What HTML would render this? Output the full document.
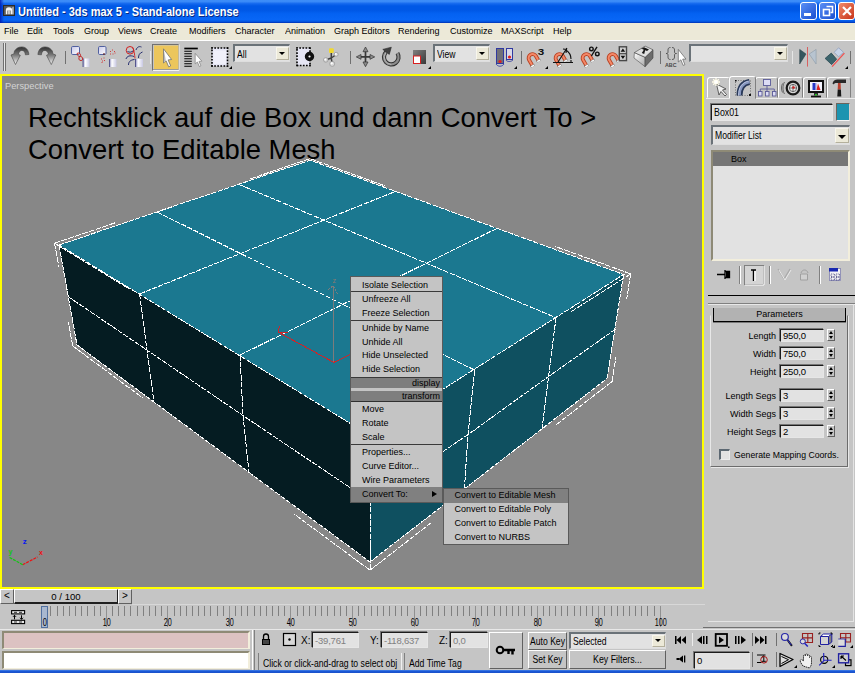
<!DOCTYPE html>
<html>
<head>
<meta charset="utf-8">
<title>3ds max 5</title>
<style>
*{box-sizing:border-box;margin:0;padding:0}
html,body{width:855px;height:673px;overflow:hidden;background:#c5c5c5;font-family:"Liberation Sans",sans-serif;font-size:9px;color:#000}
.abs{position:absolute}
#titlebar{position:absolute;left:0;top:0;width:855px;height:23px;background:linear-gradient(to bottom,#3d8ef8 0%,#3a8af8 7%,#1468ee 16%,#0058e6 26%,#0058e6 45%,#0462f2 60%,#0866f6 86%,#0458e2 93%,#0040c8 97%,#0030b0 100%)}
#titlebar .t{position:absolute;left:18px;top:5px;transform:scaleY(1.18);transform-origin:left center;color:#fff;font-weight:bold;font-size:11px;letter-spacing:0px;text-shadow:1px 1px 0 #0a2a80;white-space:nowrap}
.wb{position:absolute;top:2px;height:18px;margin-left:-0.600px;border:1px solid #fff;border-radius:3px}
#menubar{position:absolute;left:0;top:23px;width:855px;height:17px;background:#ece9d8}
#menubar span{position:absolute;top:2px;font-size:9.600px;transform:scaleX(.94);transform-origin:left center;white-space:nowrap}
#toolbar{position:absolute;left:0;top:40px;width:855px;height:34px;background:#c5c5c5;border-top:1px solid #fff}
.sep{position:absolute;width:2px;border-left:1px solid #808080;border-right:1px solid #fff}
.dd{position:absolute;height:18px;background:#e2e2e2;border:2px solid;border-width:2px 1px 1px 2px;border-color:#6a7278 #dedede #dedede #6a7278;font-size:10.500px;line-height:16px;padding-left:2px;white-space:nowrap;overflow:hidden}
.dd span{display:inline-block;transform:scaleX(.82);transform-origin:left center}
.ddb{position:absolute;right:0;top:1px;bottom:1px;width:13px;background:#ece9d8;border:1px solid;border-color:#f8f6ec #b4b09c #b4b09c #f8f6ec}
.ddb:empty:after{content:"";position:absolute;left:2px;top:50%;margin-top:-2px;border:3.500px solid transparent;border-top:3.500px solid #000;border-bottom:0}
#viewport{position:absolute;left:0;top:74px;width:704px;height:515px;background:#878787;border:2px solid #ffff00;overflow:hidden}
.fld{position:absolute;background:#e2e2e2;border:1px solid;border-color:#1c1c1c #e6e6e6 #e6e6e6 #1c1c1c;box-shadow:-1px -1px 0 rgba(40,40,40,.5);font-size:9.500px;letter-spacing:-.200px;white-space:nowrap;overflow:hidden;padding-left:2px}
.btn{position:absolute;background:#c5c5c5;border:1px solid;border-color:#fff #606060 #606060 #fff;font-size:9px;text-align:center;white-space:nowrap}

#cm,#sm{position:absolute;background:#c4c4c4;border:1px solid #5a5a5a;font-size:9px}
#cm div,#sm div{position:absolute;left:0;right:0;height:14px;line-height:15px;white-space:nowrap}
#cm .i{padding-left:11px}
#cm .l{height:1px;background:#3a3a3a}
#cm .h{background:#7e7e7e;text-align:right;padding-right:2px;height:10.500px;line-height:10px}
#sm .i{padding-left:11px;line-height:13.500px}

.tab{position:absolute;top:3px;height:21px;border:1px solid;border-color:#fff #808080 transparent #fff;border-radius:3px 3px 0 0;background:#c5c5c5}
.lbl{position:absolute;text-align:right;font-size:9px;white-space:nowrap;height:12px;line-height:12px}
.spin{position:absolute;width:8px;height:12px;border:1px solid;border-color:#fff #606060 #606060 #fff;background:#c5c5c5}
.spin:before{content:"";position:absolute;left:1px;top:1px;border:2px solid transparent;border-bottom:3px solid #000;border-top:0}
.spin:after{content:"";position:absolute;left:1px;top:6px;border:2px solid transparent;border-top:3px solid #000;border-bottom:0}
</style>
</head>
<body>
<!-- TITLE BAR -->
<div id="titlebar"><div class="abs" style="left:0;top:0;width:5px;height:23px;background:linear-gradient(to right,rgba(0,24,176,.85) 0,rgba(0,24,176,.5) 1.500px,rgba(0,40,200,0) 4px)"></div>
 <svg class="abs" style="left:3px;top:5px" width="12" height="11" viewBox="0 0 12 11"><rect width="12" height="11" fill="#2a2a2a"/><rect x="1" y="1" width="10" height="9" fill="#585858"/><path d="M2.800 9.300V5.500a3.200 3.200 0 0 1 6.400 0V9.300h-1.600V5.800l-.900-.800v4.300H5.300V5l-.900.800v3.500z" fill="#f4f4f4"/><path d="M9.300 2.500l1.200-.800v7.600h-1.200z" fill="#d8d8d8"/></svg>
 <div class="t">Untitled - 3ds max 5 - Stand-alone License</div>
 <div class="wb" style="left:801px;width:17px;background:linear-gradient(135deg,#5b8ff5,#1a4fd0)"><div class="abs" style="left:3px;top:10px;width:7px;height:3px;background:#fff"></div></div>
 <div class="wb" style="left:820px;width:17px;background:linear-gradient(135deg,#5b8ff5,#1a4fd0)"><svg class="abs" style="left:2px;top:2px" width="12" height="12"><path d="M4.5 1.5h6v6h-2" fill="none" stroke="#fff" stroke-width="1.6"/><rect x="1.5" y="4.5" width="6" height="6" fill="none" stroke="#fff" stroke-width="1.6"/></svg></div>
 <div class="wb" style="left:839px;width:17px;background:linear-gradient(135deg,#f08a6a,#c8341a)"><svg class="abs" style="left:2px;top:2px" width="12" height="12"><path d="M2 2l8 8M10 2l-8 8" stroke="#fff" stroke-width="2.2"/></svg></div>
</div>
<!-- MENU BAR -->
<div id="menubar">
 <span style="left:4px">File</span><span style="left:27px">Edit</span><span style="left:53px">Tools</span><span style="left:84px">Group</span><span style="left:118px">Views</span><span style="left:150px">Create</span><span style="left:189px">Modifiers</span><span style="left:235px">Character</span><span style="left:285px">Animation</span><span style="left:334px">Graph Editors</span><span style="left:398px">Rendering</span><span style="left:450px">Customize</span><span style="left:501px">MAXScript</span><span style="left:553px">Help</span>
</div>
<!-- TOOLBAR -->
<div id="toolbar">
<svg class="abs" style="left:0;top:-1px" width="855" height="34" viewBox="0 40 855 34">
<defs>
 <linearGradient id="gm" x1="0" y1="0" x2="0" y2="1"><stop offset="0" stop-color="#303030"/><stop offset=".45" stop-color="#787878"/><stop offset="1" stop-color="#fafafa"/></linearGradient>
 <linearGradient id="gb" x1="0" y1="0" x2="1" y2="1"><stop offset="0" stop-color="#c8c8e8"/><stop offset="1" stop-color="#ffffff"/></linearGradient>
 <linearGradient id="gs" x1="0" y1="0" x2="1" y2="1"><stop offset="0" stop-color="#808080"/><stop offset="1" stop-color="#383838"/></linearGradient>
 <g id="mag"><path d="M5.070 12.780L1.820 7.150A3.900 3.900 0 0 1 8.580 3.250L11.080 7.580" fill="none" stroke="#b84020" stroke-width="3.800"/><path d="M5.070 12.780L1.820 7.150A3.900 3.900 0 0 1 8.580 3.250L11.080 7.580" fill="none" stroke="#f48868" stroke-width="2"/><path d="M4.770 12.260l.900 1.560M10.780 7.060l.900 1.560" stroke="#707070" stroke-width="4.200"/><path d="M4.970 12.600l.700 1.200M10.980 7.400l.700 1.200" stroke="#fcfcfc" stroke-width="3.200"/></g>
 <path id="fly" d="M0 3h3v-3z" fill="#000"/>
</defs>
<!-- grip -->
<path d="M3.500 43v28M5.500 43v28" stroke="#707070" stroke-width="1"/><path d="M4.500 43v28" stroke="#e8e8e8" stroke-width="1"/>
<!-- undo -->
<path id="undo" d="M28.900 54.500C28.500 50 26 46.900 21.800 46.900C18.500 46.900 16 48.500 14.500 51L13.900 53.900L11 55L15.500 64.500L20.300 55.300L18.200 54.200C19 51.800 20.300 50.400 21.800 50.400C24 50.400 25.200 52 25.400 54.800z" fill="url(#gm)" stroke="#404040" stroke-width=".600"/>
<!-- redo -->
<use href="#undo" transform="translate(66.800 0) scale(-1 1)"/>
<!-- separators -->
<g stroke="#707070" stroke-width="1"><path d="M65.500 51v13M350.500 51v13M521.500 51v13M660.500 51v13M850.500 51v13"/></g><g stroke="#e6e6e6" stroke-width="1"><path d="M150.500 51v13M792.500 51v13"/></g>
<!-- link -->
<defs><linearGradient id="gl" x1="0" y1="0" x2="1" y2="0"><stop offset="0" stop-color="#9090c0"/><stop offset=".35" stop-color="#ffffff"/><stop offset="1" stop-color="#c8c8e4"/></linearGradient></defs>
<rect x="71.500" y="46.500" width="8" height="8" rx="1.200" fill="url(#gb)" stroke="#5060a0"/>
<rect x="83" y="58.500" width="6.500" height="8.500" fill="url(#gl)"/><path d="M83 58.500v8.500" stroke="#404080" stroke-width=".800"/>
<path d="M77 53.500c1.500-1 3-.500 3.500 1s-.500 2-1.500 2c1.500-.500 3 0 3.500 1.500s0 2.500-1.500 2.500s-2.500-1-2-2.500s-.500-1.500-1-2.500s-1-1.500-1-2z" fill="none" stroke="#c02828" stroke-width="1"/>
<!-- unlink -->
<rect x="98.500" y="46.500" width="7.500" height="8" rx="1.200" fill="url(#gb)" stroke="#5060a0"/>
<rect x="109.500" y="59" width="7" height="8" fill="url(#gl)"/><path d="M109.500 59v8" stroke="#404080" stroke-width=".800"/>
<path d="M104 53v2" stroke="#602020" stroke-width="1.200"/>
<path d="M110 51.500h1M112 50h1M114 51.500h1M110 54h1M112.500 54h1M114.500 53h1M101 59h1M103.500 58h1M102 61h1M104 60.500h1M101.500 62.500h1" stroke="#d04040" stroke-width="1"/>
<!-- bind -->
<rect x="135.500" y="59" width="7.500" height="8" fill="url(#gl)"/><path d="M135.500 59v8" stroke="#404080" stroke-width=".800"/>
<circle cx="130" cy="50.300" r="3.800" fill="none" stroke="#d02020" stroke-width="1"/>
<path d="M127.500 51.500c2 1 4 1 6-1M136 50c1-3 3-4 5.500-3M138.500 58c0-3 1-5 4-6M126 59c1-3 4-4 8-2.500M128.500 65c0-3 1.500-5 6-5.500" fill="none" stroke="#283070" stroke-width="1"/>
<path d="M132.500 47.500c2 3 2 7 2.500 11" fill="none" stroke="#d02020" stroke-width=".900"/>
<!-- select (active) -->
<rect x="152.500" y="44.500" width="26" height="25.500" fill="#c5c5c5" stroke="#707070"/><path d="M153 70.500h26v-26" fill="none" stroke="#f4f4f4"/>
<rect x="154" y="45.500" width="24.300" height="23.500" fill="#ecc65c"/>
<path d="M163.500 48.800v14.200l2.600-2.200l2.600 6l2-.900l-2.600-6l3.500-.400z" fill="#fff" stroke="#707070" stroke-width=".800"/>
<path d="M164 50.500v11.500l1.800-1.500z" fill="#b8b8b8"/>
<!-- select by name -->
<path d="M184.300 48.500h13.500" stroke="#000" stroke-width="1.700"/>
<path d="M184.300 51.200h7.500M184.300 53.700h7.500M184.300 56.200h7.500M184.300 58.700h7.500M184.300 61.200h7.500M184.300 63.700h7.500M184.300 66.200h7.500" stroke="#000" stroke-width="1.100"/>
<path d="M195.200 53.400v10.500l2.200-1.900l1.900 4.500l1.600-.700l-1.900-4.400l2.900-.200z" fill="#fff" stroke="#808080" stroke-width=".700"/>
<!-- region -->
<rect x="212" y="48" width="15.500" height="18" fill="#e6e6f4"/><rect x="213.500" y="50.500" width="12.500" height="13.500" fill="#f0f0fa"/>
<g stroke="#000" stroke-width="1.600" stroke-dasharray="1.700 1.400"><path d="M211.2 48.0h17.1"/><path d="M228.3 66.0h-17.1"/><path d="M227.5 47.2v19.6"/><path d="M212.0 66.8v-19.6"/></g>
<use href="#fly" x="229" y="66"/>
<!-- window/crossing -->
<rect x="297" y="48" width="13" height="17.500" fill="#e6e6f4"/>
<g stroke="#000" stroke-width="1.600" stroke-dasharray="1.700 1.400"><path d="M296.2 48.0h14.6"/><path d="M310.8 65.5h-14.6"/><path d="M310.0 47.2v19.1"/><path d="M297.0 66.3v-19.1"/></g>
<circle cx="309.500" cy="56.500" r="2.900" fill="#fff" stroke="#101010" stroke-width="3.600"/>
<!-- manipulate -->
<path d="M331.300 51v7l-5.500 2M331.300 58l5-3.500M331.300 58l.900 6" stroke="#404040" stroke-width="1.500" fill="none"/>
<rect x="329" y="48.300" width="4.800" height="4.600" rx="1" fill="#f0d830"/>
<circle cx="325.800" cy="59.900" r="2.300" fill="#d4d4d4" stroke="#8c8c8c" stroke-width=".600"/><circle cx="336.200" cy="54.400" r="2" fill="#dcdcdc" stroke="#8c8c8c" stroke-width=".600"/><circle cx="332.200" cy="63.900" r="2.500" fill="#d8d8d8" stroke="#8c8c8c" stroke-width=".600"/>
<circle cx="325.300" cy="59.400" r="1" fill="#fff"/><circle cx="335.800" cy="54" r=".900" fill="#fff"/><circle cx="331.700" cy="63.300" r="1.100" fill="#fff"/>
<!-- move -->
<path d="M365.500 51v12M359.500 56.900h12" stroke="#383838" stroke-width="1.700"/>
<g fill="#8c8c8c" stroke="#303030" stroke-width=".700" stroke-linejoin="round"><path d="M365.500 47l2.500 4.700h-5z"/><path d="M365.500 66.700l2.500-4.700h-5z"/><path d="M356.300 56.900l4.700-2.400v4.800z"/><path d="M374.700 56.900l-4.700-2.400v4.800z"/></g>
<!-- rotate -->
<path d="M386.100 52A7.300 7.300 0 1 0 397.400 53.200" fill="none" stroke="#303030" stroke-width="4.200"/><path d="M386.100 52A7.300 7.300 0 1 0 397.400 53.200" fill="none" stroke="#8c8c8c" stroke-width="2.200"/><path d="M385.600 53A7.300 7.300 0 0 0 391.300 64.500" fill="none" stroke="#b8b8b8" stroke-width="1"/>
<path d="M382.800 49.400L391.300 47.200L389.300 54.400z" fill="#404040" stroke="#282828" stroke-width=".600"/>
<!-- scale -->
<rect x="413" y="50" width="13" height="14" fill="url(#gs)"/><rect x="413.500" y="56" width="7" height="7.500" fill="#fff" stroke="#d82020"/>
<use href="#fly" x="428" y="66"/>
<!-- use pivot -->
<rect x="496.500" y="48.500" width="7" height="15" fill="#707078" stroke="#3038a0"/><rect x="506.500" y="48.500" width="6" height="11" fill="#d8d8e8" stroke="#3038a0"/>
<path d="M496 64c2 3 6 3 8 0M506 60c1 2 5 2 7 0" fill="none" stroke="#3038a0" stroke-width=".800"/>
<circle cx="500" cy="61.500" r="1.600" fill="#e02020"/><circle cx="509.500" cy="57" r="1.600" fill="#e02020"/>
<use href="#fly" x="514" y="66"/>
<!-- snaps -->
<use href="#mag" x="527.3" y="52.800"/><text x="537.700" y="55" font-size="9.500" font-weight="bold" font-family="Liberation Sans" fill="#101010" textLength="6.500" lengthAdjust="spacingAndGlyphs">3</text>
<use href="#fly" x="545" y="66"/>
<use href="#mag" x="554.3" y="52.800"/><path d="M553 62.500h20M558 62l9-14M566 50c3 2 5 5 5 9M563 49l3.500.500l-.500 3.500M571 60v3" fill="none" stroke="#101010" stroke-width="1.100"/>
<use href="#mag" x="581.3" y="52.800"/><circle cx="591.400" cy="48.900" r="1.800" fill="none" stroke="#101010" stroke-width="1.400"/><circle cx="597.300" cy="53.900" r="1.800" fill="none" stroke="#101010" stroke-width="1.400"/><path d="M597 46.800L591.400 56" stroke="#101010" stroke-width="1.400"/>
<use href="#mag" x="607.3" y="52.800"/><rect x="619.300" y="46.800" width="7.200" height="13.800" fill="#cfcfcf" stroke="#484848" stroke-width="1.400"/><path d="M619.300 53.700h7.200" stroke="#484848" stroke-width="1.200"/><path d="M620.600 51.800h4.600l-2.300-3.300zM620.600 55.800h4.600l-2.300 3.300z" fill="#101010"/>
<!-- keycap -->
<defs><linearGradient id="gk" x1="0" y1="0" x2="1" y2="1"><stop offset="0" stop-color="#ffffff"/><stop offset="1" stop-color="#a8a8a8"/></linearGradient></defs>
<path d="M634.400 52.600L645.100 57.300L645.100 66.700L634 58z" fill="url(#gk)" stroke="#505050" stroke-width=".600"/>
<path d="M645.100 57.300L653 49.800L653 58L645.100 66.700z" fill="#6c6c6c" stroke="#404040" stroke-width=".600"/>
<path d="M634.400 52.600L645.100 46.100L653 49.800L645.100 57.300z" fill="#e0e0e0" stroke="#404040" stroke-width=".600"/>
<path d="M639.500 50l4.500-2.700l5 2.300l-2 1.400l-1.800-.800l-1 3.800l-2.400-1l2-3.300l-2.300-1z" fill="#181818"/>
<!-- {} ABC -->
<path d="M670.500 47.500c-2 0-2.500 1-2.500 2.500v2c0 1-.500 1.500-2 1.500c1.500 0 2 .500 2 1.500v2c0 1.500.500 2.500 2.500 2.500M672 47.500c2 0 2.500 1 2.500 2.500v2c0 1 .500 1.500 2 1.500c-1.500 0-2 .500-2 1.500v2c0 1.500-.500 2.500-2.500 2.500" fill="none" stroke="#505050" stroke-width=".900"/>
<text x="665" y="66.500" font-size="6" font-weight="bold" font-family="Liberation Sans" fill="#484848" textLength="11.500" lengthAdjust="spacingAndGlyphs">ABC</text>
<path d="M678.300 49.400v12.600l2.600-2.200l2.200 5.600l1.800-.700l-2.200-5.600h3.300z" fill="#fff" stroke="#606060" stroke-width=".700"/>
<!-- mirror -->
<path d="M799.700 49.400L806 54L799.700 64z" fill="#34565e" stroke="#20383e" stroke-width=".500"/><path d="M816.100 49.400L809.200 54L816.100 64z" fill="#b8c4d0" stroke="#8090a0" stroke-width=".500"/><path d="M807.500 47v19.600" stroke="#d86060" stroke-width="1"/>
<!-- align -->
<path d="M825.100 58.400L831.300 53.100L836.600 59.200L831.700 64.600z" fill="#3c646c" stroke="#284850" stroke-width=".800" stroke-linejoin="round"/>
<path d="M834.100 52.300L838.600 47.800L843.600 52.300L838.600 56.800z" fill="#c8d4e8" stroke="#8898b8" stroke-width=".700"/>
<path d="M832.100 66.600L844.400 53.100" stroke="#f05050" stroke-width="1.300"/>
<use href="#fly" x="845" y="66"/>
</svg>
<div class="dd" style="left:233px;top:3px;width:57px"><span>All</span><div class="ddb"></div></div>
<div class="dd" style="left:433px;top:3px;width:57px"><span>View</span><div class="ddb"></div></div>
<div class="dd" style="left:689px;top:3px;width:99px"><div class="ddb"></div></div>

</div>
<!-- VIEWPORT -->
<div id="viewport">
<svg class="abs" style="left:-2px;top:-2px" width="704" height="515" viewBox="0 74 704 515">
 <!-- box faces -->
 <polygon points="59.0,245.0 310.0,160.2 623.6,274.5 370.0,435.5" fill="#1b7890" shape-rendering="crispEdges"/>
 <polygon points="59.0,245.0 370.0,435.5 370.0,562.0 77.0,345.0" fill="#051c22"/>
 <polygon points="370.0,435.5 623.6,274.5 607.0,378.5 370.0,562.0" fill="#0f5060"/>
 <g stroke="#fff" stroke-width="1" fill="none" shape-rendering="crispEdges" stroke-dasharray="5.500 1.200">
  <polygon points="59.0,245.0 310.0,160.2 623.6,274.5 370.0,435.5"/>
  <path d="M157.5 212.1L474.6 370.1M239.4 184.6L556.0 317.7M139.6 294.0L396.2 191.1M240.0 355.1L496.1 228.8M59.0 245.0L77.0 345.0L370.0 562.0L370.0 435.5M68 296.500L147 350.100L243 415.600L370 501M139.600 294L147 350.100L154 402M240 355.100L243 415.600L249 472.600M623.6 274.5L607.0 378.5L370.0 562.0M370 501L468 434.600L548.600 376.500L615.500 329.200M474.600 370.100L468 434.600L464.400 489M556 317.700L548.600 376.500L541.900 429.600"/>
 </g>
 <!-- selection brackets -->
 <g stroke="#fff" stroke-width="1" fill="none" shape-rendering="crispEdges" stroke-dasharray="6 1.200"><path d="M54.6 243.3L114.8 222.9M54.6 243.3L58.9 267.3M54.6 243.3L129.2 289.0M310.0 158.6L249.8 179.0M310.0 158.6L385.3 186.0M630.7 273.9L555.4 246.5M630.7 273.9L626.7 298.9M630.7 273.9L569.8 312.5M72.7 346.0L68.4 322.0M72.7 346.0L143.0 398.1M612.0 381.6L616.0 356.6M612.0 381.6L555.1 425.6M370.0 570.2L294.1 514.0M370.0 570.2L431.4 522.6M370.0 570.2L370.0 539.8"/></g>
 <!-- pivot axis -->
 <g stroke="#d02428" stroke-width="1" fill="none" shape-rendering="crispEdges"><path d="M278.600 332.400L333.800 362.400L352 353.500M279.300 325.700L278.600 332.400L288.200 332.400"/></g>
 <g stroke="#7c7c7c" stroke-width="1" fill="none" shape-rendering="crispEdges"><path d="M333.500 362L333.500 285.600"/><path d="M328 289.500L333.500 285.600L338 295" stroke-dasharray="2 1.500"/></g>
 <text x="332.500" y="283" font-size="7" fill="#8a7a70" font-family="Liberation Sans">z</text>
 <!-- world axis -->
 <g fill="none" stroke-width="1.200"><path d="M22.700 564.700L37.500 557" stroke="#f01010" stroke-dasharray="3 1"/><path d="M22.700 564.700L8.800 557" stroke="#10c810" stroke-dasharray="3 1"/></g>
 <text x="22.700" y="544" font-size="8" font-weight="bold" fill="#0818f0" font-family="Liberation Sans">z</text>
 <text x="39" y="555" font-size="7" font-weight="bold" fill="#f01010" font-family="Liberation Sans">x</text>
 <text x="8.500" y="554" font-size="7" font-weight="bold" fill="#10c810" font-family="Liberation Sans">y</text>
 <text x="5" y="88.500" font-size="9.300" fill="#d4d4d4" font-family="Liberation Sans">Perspective</text>
 <text x="28" y="127" font-size="27.4" fill="#000" font-family="Liberation Sans">Rechtsklick auf die Box und dann Convert To &gt;</text>
 <text x="28" y="159" font-size="27.4" fill="#000" font-family="Liberation Sans">Convert to Editable Mesh</text>
</svg>
<div id="cm" style="left:348px;top:200px;width:93px;height:227px">
 <div class="i" style="top:1px">Isolate Selection</div>
 <div class="i" style="top:15px">Unfreeze All</div>
 <div class="i" style="top:29px">Freeze Selection</div>
 <div class="i" style="top:44px">Unhide by Name</div>
 <div class="i" style="top:58px">Unhide All</div>
 <div class="i" style="top:71px">Hide Unselected</div>
 <div class="i" style="top:85px">Hide Selection</div>
 <div class="l" style="top:14px"></div><div class="l" style="top:43px"></div>
 <div class="l" style="top:99.500px"></div><div class="h" style="top:100.500px">display</div><div class="h" style="top:113.500px">transform</div>
 <div class="l" style="top:124px;background:#303030"></div>
 <div class="i" style="top:125px">Move</div>
 <div class="i" style="top:139px">Rotate</div>
 <div class="i" style="top:153px">Scale</div>
 <div class="l" style="top:167px"></div>
 <div class="i" style="top:168px">Properties...</div>
 <div class="i" style="top:182px">Curve Editor...</div>
 <div class="i" style="top:196px">Wire Parameters</div>
 <div class="i" style="top:210px;height:15px;background:#808080">Convert To:<span style="position:absolute;right:5px;top:4px;border:3.500px solid transparent;border-left:5.500px solid #000;border-right:0"></span></div>
</div>
<div id="sm" style="left:440.500px;top:411.500px;width:126px;height:57.500px">
 <div class="i" style="top:0px;background:#808080">Convert to Editable Mesh</div>
 <div class="i" style="top:14px">Convert to Editable Poly</div>
 <div class="i" style="top:28px">Convert to Editable Patch</div>
 <div class="i" style="top:42px">Convert to NURBS</div>
</div>


</div>
<!-- RIGHT PANEL -->
<div id="panel" class="abs" style="left:704px;top:74px;width:151px;height:515px">
<div class="tab" style="left:3px;width:23px"></div>
<div class="tab" style="left:25px;width:27px;top:2px;height:23px;background:#c5c5c5;z-index:2"></div>
<div class="tab" style="left:51px;width:23px"></div>
<div class="tab" style="left:74px;width:25px"></div>
<div class="tab" style="left:99px;width:24px"></div>
<div class="tab" style="left:123px;width:24px"></div>
<div class="abs" style="left:2px;top:24px;width:149px;height:1px;background:#ececec"></div>
<svg class="abs" style="left:0;top:0;z-index:3" width="151" height="26" viewBox="704 74 151 26">
 <!-- create: arrow with star -->
 <path d="M716.500 84l2.500 11l2-3.500l4 4.500l1.500-1.500l-4-4.500l3.500-1z" fill="#f0f0f0" stroke="#404040" stroke-width=".800"/>
 <path d="M716 78v8M712 82h8M713.200 79.200l5.600 5.600M718.800 79.200l-5.600 5.600" stroke="#fffce8" stroke-width="1.300"/><circle cx="716" cy="82" r="1.800" fill="#fff"/>
 <!-- modify: arc -->
 <path d="M735.500 80.500h15v15h-15z" fill="none" stroke="#505050" stroke-width=".700" stroke-dasharray="1 1.500"/>
 <path d="M739.500 95.500c0-8 3.500-12.500 10-13.500" fill="none" stroke="#283858" stroke-width="6"/>
 <path d="M739.500 95.500c0-8 3.500-12.500 10-13.500" fill="none" stroke="#8898c0" stroke-width="2.600"/>
 <path d="M738.500 95.500c0-8 3.500-13 10-14.500" fill="none" stroke="#c8d0e8" stroke-width=".800"/>
 <rect x="749" y="94" width="2" height="2" fill="#101010"/><rect x="735" y="80" width="1.500" height="1.500" fill="#101010"/>
 <!-- hierarchy -->
 <g fill="#dcdcf4" stroke="#5a5a98" stroke-width=".900"><rect x="763.500" y="79.500" width="7" height="6"/><rect x="758.500" y="91.500" width="3.500" height="4.500"/><rect x="765.500" y="91.500" width="3.500" height="4.500"/><rect x="772.500" y="91.500" width="3.500" height="4.500"/></g>
 <path d="M767 86v5.500M760.300 91.500v-2.500h14v2.500" fill="none" stroke="#5a5a98" stroke-width=".900"/>
 <!-- motion wheel -->
 <circle cx="793" cy="88" r="6.300" fill="#d8d8d8" stroke="#181818" stroke-width="2.200"/>
 <circle cx="793" cy="88" r="3.600" fill="#ececec" stroke="#505050" stroke-width=".800"/>
 <path d="M793 84v8M789 88h8" stroke="#505050" stroke-width=".800"/><circle cx="793.500" cy="87.500" r="1.300" fill="#d02020"/>
 <path d="M784.500 82c-2 3-2 9 0 12M782.500 83.500c-1.300 2.500-1.300 6.500 0 9" fill="none" stroke="#585858" stroke-width=".900"/>
 <!-- display monitor -->
 <rect x="809" y="81" width="14" height="11" fill="#f4f4ff" stroke="#101010" stroke-width="2"/>
 <path d="M811 96.500h10" stroke="#101010" stroke-width="1.800"/><path d="M814 93h4v2.500h-4z" fill="#303030"/><path d="M815 94h2v1.500h-2z" fill="#20c020"/>
 <path d="M812.500 83h3v7h-3z" fill="#2838c8"/><path d="M818 83.500l2.500 6.500h-4z" fill="#d82020"/><path d="M816 83v7" stroke="#8080d0" stroke-width=".800"/>
 <!-- utilities hammer -->
 <path d="M832.500 83.500c.500-2.500 2.500-4 5-4h8.500v3.500h-9.500c-1.500 0-2.500.500-3 1.500z" fill="#282828"/>
 <path d="M838 83h2.600l.300 6.500h-3.200z" fill="#b84030"/><path d="M837.700 89.500h3.200l.400 7h-4z" fill="#181818"/>
</svg>
<div class="fld" style="left:7px;top:29.500px;width:122px;height:17px;line-height:15px;font-size:10.500px;letter-spacing:0"><span style="display:inline-block;transform:scaleX(.84);transform-origin:left center">Box01</span></div>
<div class="abs" style="left:132.300px;top:29.200px;width:14px;height:17.600px;background:#1c94b0;border:1px solid;border-color:#6c645c #d8d0cc #f4f4f4 #6c645c;border-width:.600px .600px 1px .600px"></div>
<div class="dd" style="left:7px;top:51px;width:139px;height:20px;line-height:17px"><span>Modifier List</span><div class="ddb" style="width:14.500px"><div class="abs" style="left:2.500px;top:6px;border:4px solid transparent;border-top:4px solid #000;border-bottom:0"></div></div></div>
<div class="abs" style="left:7px;top:76px;width:138.500px;height:111px;background:#e2e2e2;border:2px solid;border-color:#8e8a76 #f2eedc #f2eedc #8e8a76;font-size:9px"><div style="position:absolute;left:0;top:0;right:0;height:14px;background:#767676;line-height:14px;padding-left:18px">Box</div></div>
<svg class="abs" style="left:0;top:188px" width="151" height="26" viewBox="704 262 151 26">
 <path d="M717 274.500h8M725 270v9M725.500 271.500h4v6h-4" stroke="#000" stroke-width="1.300" fill="none"/><path d="M726 272h4v5h-4z" fill="#000"/>
 <path d="M739.500 266v18M769.500 266v18M819.500 266v18" stroke="#808080" stroke-width="1"/><path d="M740.500 266v18M770.500 266v18M820.500 266v18" stroke="#fff" stroke-width="1"/>
 <rect x="744.500" y="265.500" width="19" height="19" fill="#d4d4d4" stroke="#808080"/><path d="M745 285h19v-19" fill="none" stroke="#fff"/>
 <path d="M751 270h5M753.500 270v11" stroke="#000" stroke-width="1.400"/><path d="M755 271v10" stroke="#fff" stroke-width="1.400"/>
 <path d="M778 269l6 10M790 269l-6 10" stroke="#a8a8a8" stroke-width="1.200" fill="none"/><path d="M779 270l6 10M791 270l-6 10" stroke="#e8e8e8" stroke-width="1" fill="none"/>
 <path d="M800.500 274v6h7v-6z" fill="#d0d0d0" stroke="#a0a0a0"/><path d="M801 273c1-4 6-4 7 0" fill="none" stroke="#a0a0a0"/>
 <rect x="829.500" y="268.500" width="11" height="12" fill="#f4f4f4" stroke="#8080b0" stroke-width=".800"/><rect x="829" y="268" width="9" height="3.500" fill="#1828b0"/>
 <path d="M831 274h3.500v2.500h-3.500zM836 274h3.500v2.500h-3.500zM831 277.500h3.500v2.500h-3.500zM836 277.500h3.500v2.500h-3.500z" fill="none" stroke="#303070" stroke-width=".700" stroke-dasharray="1 .700"/>
</svg>
<div class="abs" style="left:4px;top:221px;width:147px;height:1px;background:#000"></div>
<div class="abs" style="left:4px;top:229px;width:147px;height:1px;background:#808080"></div>
<div class="abs" style="left:4px;top:230px;width:147px;height:1px;background:#e8e8e8"></div>
<div class="abs" style="left:6px;top:241px;width:138px;height:152px;border:1px solid;border-color:transparent #6c6c6c #6c6c6c #e8e8e8;box-shadow:1px 1px 0 #e8e8e8"></div>
<div class="abs" style="left:9px;top:234px;width:133px;height:14px;background:#b2b2b2;border:1px solid #000;border-top:0;box-shadow:0 .500px 0 #303030;text-align:center;line-height:13px">Parameters</div>
<div class="lbl" style="left:10px;top:256px;width:62px">Length</div><div class="fld" style="left:76px;top:255px;width:44px;height:13px;line-height:11px">950,0</div><div class="spin" style="left:123px;top:255px"></div>
<div class="lbl" style="left:10px;top:274px;width:62px">Width</div><div class="fld" style="left:76px;top:273px;width:44px;height:13px;line-height:11px">750,0</div><div class="spin" style="left:123px;top:273px"></div>
<div class="lbl" style="left:10px;top:292px;width:62px">Height</div><div class="fld" style="left:76px;top:291px;width:44px;height:13px;line-height:11px">250,0</div><div class="spin" style="left:123px;top:291px"></div>
<div class="lbl" style="left:10px;top:316px;width:62px">Length Segs</div><div class="fld" style="left:76px;top:315px;width:44px;height:13px;line-height:11px">3</div><div class="spin" style="left:123px;top:315px"></div>
<div class="lbl" style="left:10px;top:334px;width:62px">Width Segs</div><div class="fld" style="left:76px;top:333px;width:44px;height:13px;line-height:11px">3</div><div class="spin" style="left:123px;top:333px"></div>
<div class="lbl" style="left:10px;top:352px;width:62px">Height Segs</div><div class="fld" style="left:76px;top:351px;width:44px;height:13px;line-height:11px">2</div><div class="spin" style="left:123px;top:351px"></div>
<div class="abs" style="left:15px;top:375px;width:11px;height:11px;background:#e2e2e2;border:1px solid;border-width:2px 1px 1px 2px;border-color:#5c6872 #ececec #ececec #5c6872"></div>
<div class="abs" style="left:30px;top:374.500px;white-space:nowrap;line-height:12px;font-size:9.500px"><span style="display:inline-block;transform:scaleX(.915);transform-origin:left center">Generate Mapping Coords.</span></div>

</div>
<!-- BOTTOM -->
<div id="bottom" class="abs" style="left:0;top:589px;width:855px;height:84px">
<div class="btn" style="left:0;top:0;width:14px;height:15px;line-height:12px;font-size:10px">&lt;</div><div class="btn" style="left:14px;top:0;width:104px;height:15px;line-height:13px;font-size:9.600px;border-color:#fff #202020 #202020 #fff;border-bottom-width:2px">0 / 100</div><div class="btn" style="left:118px;top:0;width:14px;height:15px;line-height:12px;font-size:10px">&gt;</div>
<div class="abs" style="left:708px;top:32px;width:146px;height:1px;background:#e4e4e4"></div><div class="abs" style="left:853px;top:-285px;width:1px;height:318px;background:#e4e4e4"></div><div class="abs" style="left:703px;top:38px;width:152px;height:1px;background:#707070"></div>
<svg class="abs" style="left:0;top:15px" width="705" height="26" viewBox="0 604 705 26"><path d="M132 604.500h573" stroke="#d8d8d8"/><path d="M50.5 606v10M57.5 606v10M63.5 606v10M69.5 606v10M75.5 606v10M81.5 606v10M87.5 606v10M94.5 606v10M100.5 606v10M112.5 606v10M118.5 606v10M124.5 606v10M130.5 606v10M137.5 606v10M143.5 606v10M149.5 606v10M155.5 606v10M161.5 606v10M174.5 606v10M180.5 606v10M186.5 606v10M192.5 606v10M198.5 606v10M204.5 606v10M210.5 606v10M217.5 606v10M223.5 606v10M235.5 606v10M241.5 606v10M247.5 606v10M254.5 606v10M260.5 606v10M266.5 606v10M272.5 606v10M278.5 606v10M284.5 606v10M297.5 606v10M303.5 606v10M309.5 606v10M315.5 606v10M321.5 606v10M327.5 606v10M334.5 606v10M340.5 606v10M346.5 606v10M358.5 606v10M364.5 606v10M371.5 606v10M377.5 606v10M383.5 606v10M389.5 606v10M395.5 606v10M401.5 606v10M407.5 606v10M420.5 606v10M426.5 606v10M432.5 606v10M438.5 606v10M444.5 606v10M451.5 606v10M457.5 606v10M463.5 606v10M469.5 606v10M481.5 606v10M487.5 606v10M494.5 606v10M500.5 606v10M506.5 606v10M512.5 606v10M518.5 606v10M524.5 606v10M531.5 606v10M543.5 606v10M549.5 606v10M555.5 606v10M561.5 606v10M567.5 606v10M574.5 606v10M580.5 606v10M586.5 606v10M592.5 606v10M604.5 606v10M611.5 606v10M617.5 606v10M623.5 606v10M629.5 606v10M635.5 606v10M641.5 606v10M647.5 606v10M654.5 606v10" stroke="#808080" stroke-width="1"/><path d="M44.5 606v21M106.5 606v21M167.5 606v21M229.5 606v21M290.5 606v21M352.5 606v21M414.5 606v21M475.5 606v21M537.5 606v21M598.5 606v21M660.5 606v21" stroke="#909090" stroke-width="1"/><rect x="41.500" y="606.500" width="6" height="21" fill="#a8b8d0" stroke="#5070a0"/><text x="42.7" y="625.600" font-size="10" font-family="Liberation Sans" textLength="4.2" lengthAdjust="spacingAndGlyphs" fill="#000">0</text><text x="102.8" y="625.600" font-size="10" font-family="Liberation Sans" textLength="8.0" lengthAdjust="spacingAndGlyphs" fill="#000">10</text><text x="163.8" y="625.600" font-size="10" font-family="Liberation Sans" textLength="8.0" lengthAdjust="spacingAndGlyphs" fill="#000">20</text><text x="225.8" y="625.600" font-size="10" font-family="Liberation Sans" textLength="8.0" lengthAdjust="spacingAndGlyphs" fill="#000">30</text><text x="286.8" y="625.600" font-size="10" font-family="Liberation Sans" textLength="8.0" lengthAdjust="spacingAndGlyphs" fill="#000">40</text><text x="348.8" y="625.600" font-size="10" font-family="Liberation Sans" textLength="8.0" lengthAdjust="spacingAndGlyphs" fill="#000">50</text><text x="410.8" y="625.600" font-size="10" font-family="Liberation Sans" textLength="8.0" lengthAdjust="spacingAndGlyphs" fill="#000">60</text><text x="471.8" y="625.600" font-size="10" font-family="Liberation Sans" textLength="8.0" lengthAdjust="spacingAndGlyphs" fill="#000">70</text><text x="533.8" y="625.600" font-size="10" font-family="Liberation Sans" textLength="8.0" lengthAdjust="spacingAndGlyphs" fill="#000">80</text><text x="594.8" y="625.600" font-size="10" font-family="Liberation Sans" textLength="8.0" lengthAdjust="spacingAndGlyphs" fill="#000">90</text><text x="654.8" y="625.600" font-size="10" font-family="Liberation Sans" textLength="12.0" lengthAdjust="spacingAndGlyphs" fill="#000">100</text><rect x="11.600" y="610.600" width="13" height="3.300" fill="#e8e8e8" stroke="#000" stroke-width="1.100"/><rect x="11.600" y="620.300" width="13" height="3.300" fill="#e8e8e8" stroke="#000" stroke-width="1.100"/><path d="M14 612.300h3M19 612.300h3M14 622h3M19 622h3" stroke="#000" stroke-width=".800"/><path d="M14.500 615.300v4M13 616.800l1.500-1.500l1.500 1.500M21.500 615.300v4M20 617.800l1.500 1.500l1.500-1.500" stroke="#000" stroke-width="1" fill="none"/></svg>
<div class="abs" style="left:0;top:40px;width:855px;height:1px;background:#e8e8e8"></div><div class="abs" style="left:1.500px;top:42px;width:248px;height:18px;background:#dcc2c2;border:2px solid;border-color:#8e8a76 #f2eedc #f2eedc #8e8a76;border-bottom-width:1px"></div><div class="abs" style="left:1.500px;top:61.500px;width:248px;height:18.500px;background:#fff;border:2px solid;border-color:#8e8a76 #f2eedc #f2eedc #8e8a76;border-bottom-width:1px"></div>
<div class="abs" style="left:252px;top:41px;width:3px;height:41px;border-left:1px solid #fff;border-right:1px solid #808080"></div><svg class="abs" style="left:255px;top:40px;z-index:5;pointer-events:none" width="600" height="44" viewBox="255 629 600 44">
 <path d="M263.500 639v-2.500a2.500 2.500 0 0 1 5 0v2.500" fill="none" stroke="#000" stroke-width="1.300"/><rect x="262" y="639" width="8" height="6" fill="#000"/><path d="M263 641h6M263 643h6" stroke="#c5c5c5" stroke-width=".700"/>
 <rect x="283.500" y="633.500" width="12" height="12" fill="#d8d8d8" stroke="#000" stroke-width="1.200"/><circle cx="289.500" cy="639.500" r="1.200" fill="#000"/>
 <!-- key -->
 <circle cx="500" cy="650" r="3.300" fill="none" stroke="#000" stroke-width="2"/><path d="M503 650h12M508.500 650v4M512.500 650v4.500" stroke="#000" stroke-width="2.400"/>
 <!-- playback -->
 <g fill="#000"><path d="M675 636h1.500v8h-1.500zM681 636v8l-4.500-4zM686 636v8l-4.500-4z"/>
 <path d="M702 636v8l-5-4zM703 636h1.500v8h-1.500zM706 636h1.500v8h-1.500z"/>
 <path d="M719 636.500l5 3.500l-5 3.500z"/>
 <path d="M735 636h1.500v8h-1.500zM738 636h1.500v8h-1.500zM741 636l5 4l-5 4z"/>
 <path d="M755 636l4.500 4l-4.500 4zM760 636l4.500 4l-4.500 4zM765 636h1.500v8h-1.500z"/>
 <path d="M683 655.500v7l-4.500-3.500zM684 655.500h1.300v7h-1.300zM676.500 658h2.500v2h-2.500z"/></g>
 <rect x="715.700" y="634" width="11.300" height="11.800" fill="none" stroke="#000" stroke-width="1.800"/><rect x="728" y="646.500" width="1.500" height="1.500" fill="#000"/>
 <path d="M752.500 633v13M776.500 633v13M752.500 652v15M776.500 652v15" stroke="#707070"/><path d="M692.500 633v13" stroke="#ececec"/>
 <!-- time config -->
 <path d="M757 655h8.500M757 662.500h4.500M761.800 657.300l2-1.500v5.500M761.800 661.300h4" stroke="#000" stroke-width="1" fill="none"/><circle cx="764" cy="659.800" r="3.300" fill="none" stroke="#a81818" stroke-width="1"/>
 <!-- nav icons row1 -->
 <circle cx="784.900" cy="636.900" r="3.400" fill="#dcdcdc" stroke="#2828a8" stroke-width="1.200"/><path d="M787.600 640l4.300 5.900" stroke="#101010" stroke-width="2"/><path d="M787.600 640l3.800 5.200" stroke="#3030d0" stroke-width="1"/>
 <path d="M802.500 633.500h10v9h-10zM807.800 633.500v9M802.500 637.900h10" fill="none" stroke="#982020" stroke-width="1.100"/><circle cx="802.800" cy="641.400" r="2.500" fill="#dcdcdc" stroke="#2828a8" stroke-width="1"/><path d="M804.600 643.300l3.200 3.300" stroke="#2020c0" stroke-width="1.500"/>
 <path d="M820.500 636.500l3-2.500h8.300v8l-3.300 2.500z" fill="#808080"/><path d="M820.500 636.500l3-2.500h8.300l-3.300 2.500z" fill="#fff"/><path d="M820.500 636.500h8v8h-8z" fill="#d4d4d4"/>
 <path d="M820.500 636.500h8v8h-8zM820.500 636.500l3-2.500h8.300l-3.300 2.500M831.800 634v8l-3.300 2.500" fill="none" stroke="#2020a0" stroke-width="1"/>
 <path d="M819 634.500v-1.500h1.500M830.500 633h1.500v1.500M819 645v1.500h1.500M831 646.500h1.500v-1.500" fill="none" stroke="#000" stroke-width="1"/>
 <path d="M840.500 633.500h10v8.500h-10zM845.800 633.500v8.500M840.500 637.700h10" fill="none" stroke="#982020" stroke-width="1.100"/><rect x="838.300" y="639" width="7" height="7.300" rx="1" fill="#dcdcdc"/><path d="M838.300 646.300h7v-7.300" fill="none" stroke="#2020a0" stroke-width="1.200"/><path d="M838.300 639h7" stroke="#2020a0" stroke-width=".800"/>
 <use href="#fly" x="832" y="645"/><use href="#fly" x="850" y="645"/>
 <!-- nav icons row2 -->
 <path d="M780 653.500l13 6l-13 7z" fill="#dedede" stroke="#000" stroke-width="1.300" stroke-linejoin="round"/><path d="M781.500 656.500l7 3.200l-7 3.800" fill="none" stroke="#000" stroke-width="1"/>
 <path d="M803 666c-2-3-3.500-5-2.500-6s2 0 3 1v-5c0-1.500 2-1.500 2 0v-1c0-1.500 2-1.500 2 0v1c0-1.500 2-1.500 2 0v1.500c0-1.500 2-1.500 2 0v5c0 3-1 4-2 5.500z" fill="#f0f0f0" stroke="#181818" stroke-width=".900" stroke-dasharray="1.500 .600"/>
 <circle cx="824.200" cy="659.800" r="3.600" fill="none" stroke="#000" stroke-width="1.100"/><path d="M823.700 652.900v8M824.200 660.300h7.400M824.200 660.300l-5 5" stroke="#2020c0" stroke-width="1.100" fill="none"/>
 <rect x="845.500" y="659.800" width="5.500" height="5.800" fill="#c5c5c5" stroke="#000" stroke-width="1.200"/><rect x="838.600" y="653.800" width="10" height="9" fill="#d0d0d0" stroke="#2020a0" stroke-width="1.400"/><path d="M846 660.500l-5-4.500M841 656h3M841 656v3" stroke="#000" stroke-width="1.100" fill="none"/>
 <use href="#fly" x="794" y="665"/><use href="#fly" x="832" y="665"/>
</svg>
<div class="abs" style="left:301px;top:46px;font-size:10px">X:</div><div class="fld" style="left:312px;top:43px;width:47px;height:16px;line-height:15px;font-size:9.500px;color:#808080">-39,761</div><div class="abs" style="left:370px;top:46px;font-size:10px">Y:</div><div class="fld" style="left:381px;top:43px;width:47px;height:16px;line-height:15px;font-size:9.500px;color:#808080">-118,637</div><div class="abs" style="left:439px;top:46px;font-size:10px">Z:</div><div class="fld" style="left:450px;top:43px;width:38px;height:16px;line-height:15px;font-size:9.500px;color:#808080">0,0</div>
<div class="abs" style="left:258px;top:64px;width:144px;height:18px;border-left:1px solid #808080;border-right:1px solid #f0f0f0;line-height:21px;padding-left:4px;white-space:nowrap;overflow:hidden;font-size:10px"><span style="display:inline-block;transform:scaleX(.865);transform-origin:left center">Click or click-and-drag to select obj</span></div><div class="abs" style="left:404px;top:64px;width:83px;height:18px;border-left:1px solid #808080;line-height:21px;padding-left:4px;white-space:nowrap;overflow:hidden;font-size:10px"><span style="display:inline-block;transform:scaleX(.865);transform-origin:left center">Add Time Tag</span></div>
<div class="btn" style="left:489px;top:43px;width:34px;height:37px"></div><div class="btn" style="left:528px;top:42.500px;width:39px;height:18.500px;line-height:17px;font-size:10px"><span style="display:block;margin:0 -10px;transform:scaleX(.86)">Auto Key</span></div><div class="btn" style="left:528px;top:61px;width:39px;height:19px;line-height:17px;font-size:10px"><span style="display:block;margin:0 -10px;transform:scaleX(.86)">Set Key</span></div><div class="dd" style="left:569px;top:42.500px;width:97px;height:17.500px;line-height:14px"><span>Selected</span><div class="ddb"></div></div><div class="btn" style="left:569px;top:61px;width:97px;height:19px;line-height:17px;font-size:10px"><span style="display:block;margin:0 -10px;transform:scaleX(.88)">Key Filters...</span></div>
<div class="fld" style="left:694px;top:63px;width:56px;height:17px;line-height:15px">0</div>
<div class="abs" style="left:0;top:80.500px;width:855px;height:3.500px;background:linear-gradient(#4a86e8,#1a5ad8 40%,#1a50c8)"></div>
</div>
</body>
</html>
